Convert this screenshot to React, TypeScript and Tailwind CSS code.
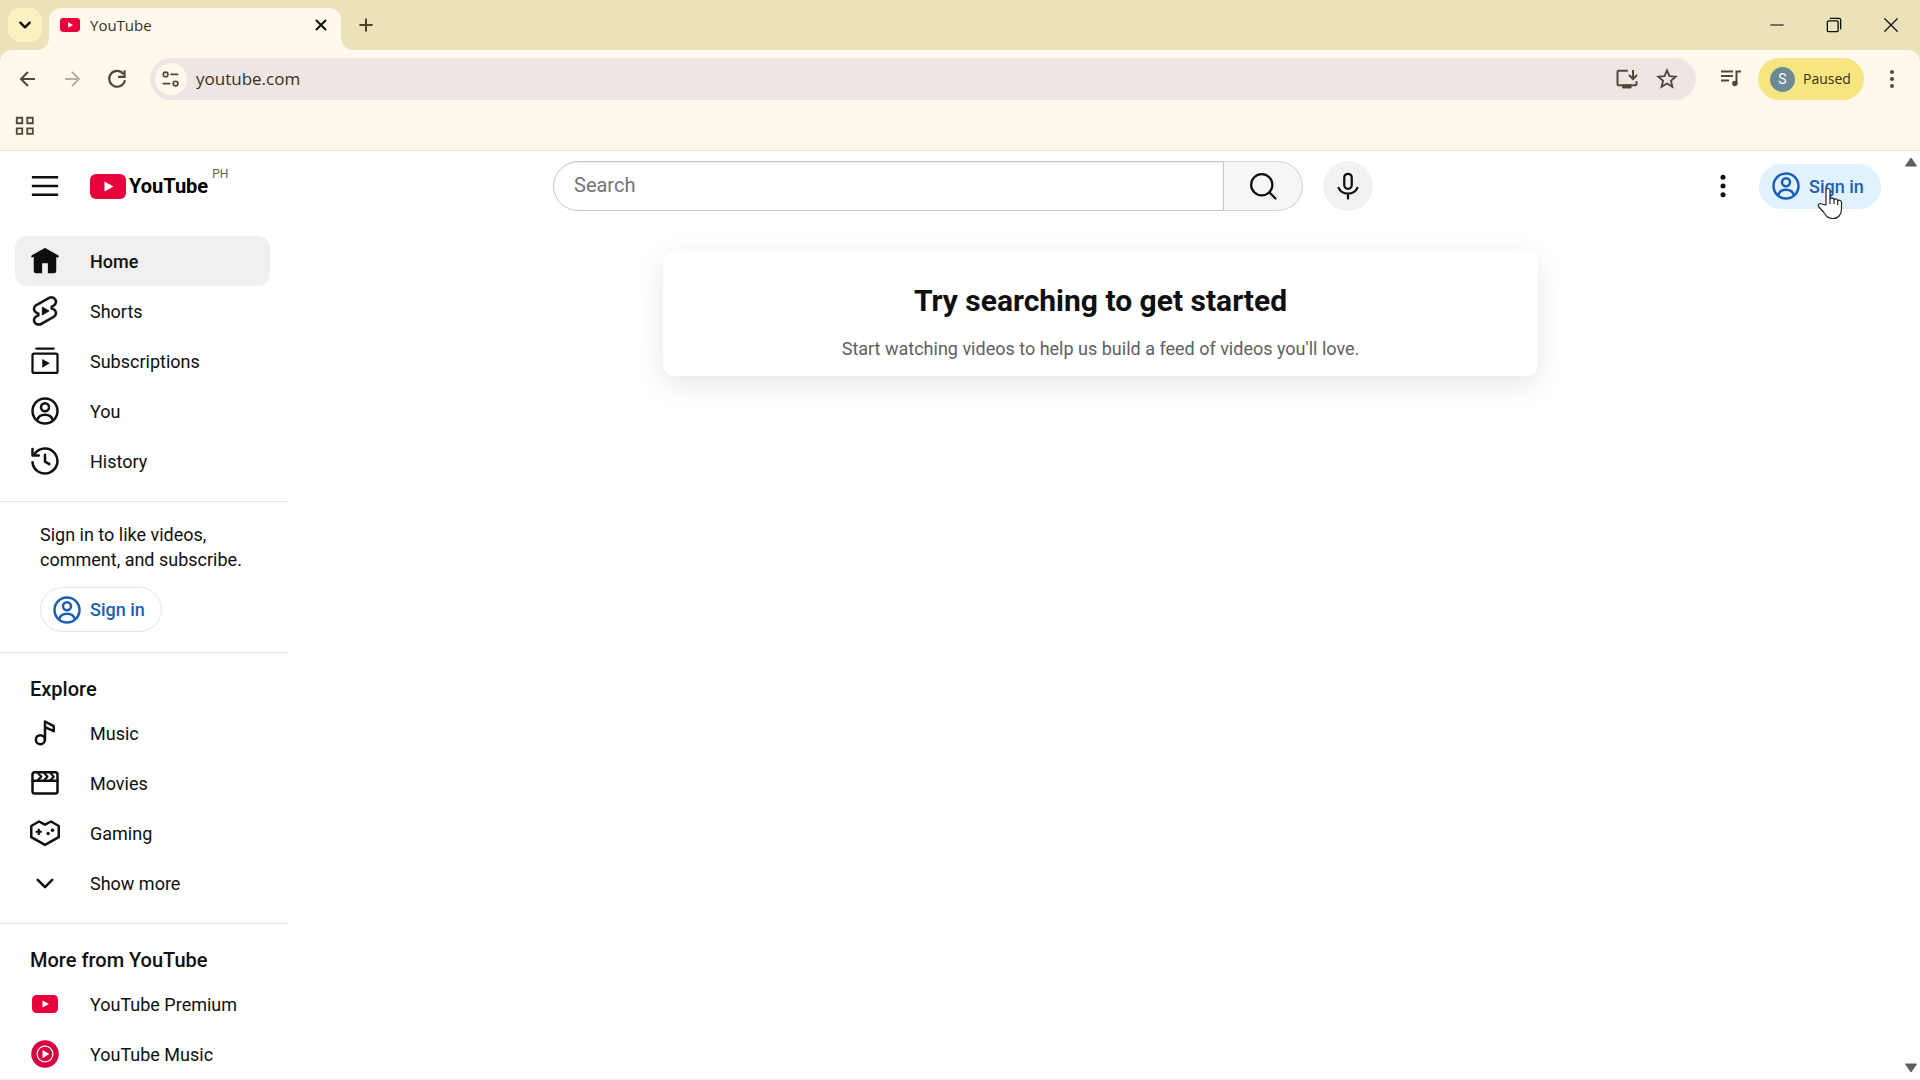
import type { ReactNode } from "react";

type IconProps = { className?: string };

function Svg({ className = "size-[30px]", children, box = "0 0 24 24" }: IconProps & { children: ReactNode; box?: string }) {
  return (
    <svg
      viewBox={box}
      className={`shrink-0 ${className}`}
      fill="none"
      stroke="currentColor"
      strokeWidth={2}
      strokeLinecap="round"
      strokeLinejoin="round"
      aria-hidden="true"
    >
      {children}
    </svg>
  );
}

const HomeIcon = () => (
  <Svg>
    <path
      d="M11.5 1.8 1.5 7.4c-.5.3-.6.9-.4 1.3.3.5.8.6 1.3.4l.6-.3V20a1.8 1.8 0 0 0 1.8 1.8h4.9v-8h4.6v8h4.9A1.8 1.8 0 0 0 21 20V8.8l.6.3c.5.2 1 .1 1.3-.4.2-.4.1-1-.4-1.3l-10-5.6a1 1 0 0 0-1 0z"
      fill="currentColor"
      stroke="none"
    />
  </Svg>
);

const ShortsIcon = () => (
  <Svg box="1.500 1.500 21 21">
    <path
      fill="currentColor"
      strokeWidth={0.3}
      fillRule="evenodd"
      d="m7.61 15.719.392-.22v-2.24l-.534-.228-.942-.404c-.869-.372-1.4-1.15-1.446-1.974-.047-.823.39-1.642 1.203-2.097h.001L15.13 3.59c1.231-.689 2.785-.27 3.466.833.652 1.058.313 2.452-.879 3.118l-1.327.743-.388.217v2.243l.53.227.942.404c.869.372 1.4 1.15 1.446 1.974.047.823-.39 1.642-1.203 2.097l-.002.001-8.845 4.964-.001.001c-1.231.688-2.784.269-3.465-.834-.652-1.058-.313-2.451.879-3.118l1.327-.742Zm1.993 6.002c-1.905 1.066-4.356.46-5.475-1.355-1.057-1.713-.548-3.89 1.117-5.025a4.14 4.14 0 01.305-.189l1.327-.742-.942-.404a4.055 4.055 0 01-.709-.391c-.963-.666-1.578-1.718-1.644-2.877-.08-1.422.679-2.77 1.968-3.49l8.847-4.966c1.905-1.066 4.356-.46 5.475 1.355 1.057 1.713.548 3.89-1.117 5.025a4.074 4.074 0 01-.305.19l-1.327.742.942.403c.253.109.49.24.709.392.963.666 1.578 1.717 1.644 2.876.08 1.423-.679 2.77-1.968 3.491l-8.847 4.965ZM10 14.567a.25.25 0 00.374.217l4.45-2.567a.25.25 0 000-.433l-4.45-2.567a.25.25 0 00-.374.216v5.134Z"
    />
  </Svg>
);

const SubscriptionsIcon = () => (
  <Svg>
    <path d="M5 2h14" strokeWidth={1.8} />
    <rect x="2" y="6" width="20" height="15.5" rx="1.2" strokeWidth={1.8} />
    <path d="M9.8 10.3v7l6-3.5z" fill="currentColor" stroke="none" />
  </Svg>
);

const PersonIcon = () => (
  <Svg>
    <circle cx="12" cy="12" r="10" />
    <circle cx="12" cy="9" r="3.2" />
    <path d="M5.800 19.200C6.600 16.300 9 15 12 15s5.400 1.300 6.200 4.200" />
  </Svg>
);

const HistoryIcon = () => (
  <Svg>
    <path d="M2 13a10 10 0 1 0 1.800-6.800" />
    <path d="M2 2.300V7.500h5" />
    <path d="M12 7v5.500l3.500 2" />
  </Svg>
);

const MusicIcon = () => (
  <Svg>
    <circle cx="8.300" cy="17.300" r="3.600" />
    <path d="M12 17V2.800l7 3.700v4L12 7.300" />
  </Svg>
);

const MoviesIcon = () => (
  <Svg>
    <rect x="2" y="3.300" width="20" height="17" rx="1.800" />
    <path d="M2 10.200h20" />
    <path d="M6 3.500 9 7 6 10M11 3.500 14 7l-3 3M16 3.500 19 7l-3 3" strokeWidth={1.7} />
  </Svg>
);

const GamingIcon = () => (
  <Svg>
    <path d="M12 5.300 16.800 2.800 23 6.400v8.900l-11 6.200L1 15.300V6.400l6.200-3.600z" />
    <path d="M7 8.500v5M4.500 11h5" strokeWidth={1.7} strokeLinecap="butt" />
    <circle cx="14.500" cy="12.300" r="1.400" fill="currentColor" stroke="none" />
    <circle cx="18" cy="9.800" r="1.400" fill="currentColor" stroke="none" />
  </Svg>
);

const ChevronIcon = () => (
  <Svg>
    <path d="m6.200 9.500 5.800 5.800 5.800-5.800" />
  </Svg>
);

function PlayBadge({ className }: IconProps) {
  return (
    <Svg className={className} box="0 0 36 25">
      <rect width="36" height="25" rx="6" fill="#e6003c" stroke="none" />
      <path d="M14.500 7.500v10l9-5z" fill="#fff" stroke="none" />
    </Svg>
  );
}

const YouTubeMusicIcon = () => (
  <Svg>
    <circle cx="12" cy="12" r="11" fill="#d9003f" stroke="none" />
    <circle cx="12" cy="12" r="6.300" stroke="#fff" strokeWidth={1} />
    <path d="M10 8.700v6.600l5.400-3.300z" fill="#fff" stroke="none" />
  </Svg>
);

const MoreDots = ({ className }: IconProps) => (
  <Svg className={className}>
    <g fill="currentColor" stroke="none">
      <circle cx="12" cy="5" r="2" />
      <circle cx="12" cy="12" r="2" />
      <circle cx="12" cy="19" r="2" />
    </g>
  </Svg>
);

function TitleBar() {
  return (
    <div className="flex h-[50px] items-end bg-[#ebe2b9]">
      <button aria-label="Search tabs" className="mb-2 ml-2 flex size-[34px] items-center justify-center rounded-xl bg-[#fbf0bf]">
        <Svg className="size-4">
          <path d="m5 8.500 7 7 7-7" strokeWidth={3.5} />
        </Svg>
      </button>
      <div className="relative ml-[7px] flex h-[42px] w-[292px] items-center rounded-t-[12px] bg-[#fff8ec] px-[11px] pb-[9px]">
        <svg viewBox="0 0 12 12" className="absolute bottom-0 -left-3 size-3 text-[#fff8ec]" aria-hidden="true">
          <path d="M12 0v12H0A12 12 0 0 0 12 0z" fill="currentColor" />
        </svg>
        <svg viewBox="0 0 12 12" className="absolute -right-3 bottom-0 size-3 text-[#fff8ec]" aria-hidden="true">
          <path d="M0 0v12h12A12 12 0 0 1 0 0z" fill="currentColor" />
        </svg>
        <PlayBadge className="h-[14px] w-5" />
        <span className="ml-[10px] flex-1 font-['Open_Sans',sans-serif] text-[15px] leading-5 text-[#35321f]">YouTube</span>
        <button aria-label="Close tab">
          <Svg className="size-[18px]">
            <path d="m6 6 12 12M18 6 6 18" strokeWidth={2.6} />
          </Svg>
        </button>
      </div>
      <button aria-label="New tab" className="mb-[15px] ml-[15px]">
        <Svg className="size-5 text-[#4a4530]">
          <path d="M12 5v14M5 12h14" strokeWidth={2.4} />
        </Svg>
      </button>
      <div className="mb-[15px] ml-auto flex items-center gap-[37px] pr-[19px]">
        <button aria-label="Minimize">
          <Svg className="size-5">
            <path d="M4 12h16" strokeWidth={1.3} strokeLinecap="butt" />
          </Svg>
        </button>
        <button aria-label="Restore">
          <Svg className="size-5">
            <rect x="4" y="7" width="13" height="13" rx="1.500" strokeWidth={1.6} />
            <path d="M7.500 4H18a2 2 0 0 1 2 2v10.500" strokeWidth={1.6} />
          </Svg>
        </button>
        <button aria-label="Close">
          <Svg className="size-5">
            <path d="m4.500 4.500 15 15M19.500 4.500l-15 15" strokeWidth={1.5} />
          </Svg>
        </button>
      </div>
    </div>
  );
}

function Toolbar() {
  return (
    <div className="bg-[#ebe2b9]">
      <div className="flex h-[100px] flex-col rounded-t-xl bg-[#fff8ec] pt-2 text-[#4d4837]">
        <div className="flex h-[42px] items-center">
          <button aria-label="Back" className="ml-4">
            <Svg className="size-6">
              <path d="M19 12H5M12 5l-7 7 7 7" strokeLinecap="butt" strokeLinejoin="miter" />
            </Svg>
          </button>
          <button aria-label="Forward" className="ml-5 text-[#b5b0a2]">
            <Svg className="size-6">
              <path d="M5 12h14M12 5l7 7-7 7" strokeLinecap="butt" strokeLinejoin="miter" />
            </Svg>
          </button>
          <button aria-label="Reload" className="ml-5">
            <Svg className="size-[26px]">
              <path d="M18 7.500A7.300 7.300 0 1 0 19.300 13" strokeLinecap="butt" />
              <path d="M19 4v6h-6" strokeLinecap="butt" strokeLinejoin="miter" />
            </Svg>
          </button>
          <div className="ml-5 flex h-[42px] flex-1 items-center rounded-full bg-[#efe6e3] pr-[18px] pl-[5px]">
            <button aria-label="Site information" className="flex size-8 items-center justify-center rounded-full bg-[#fff8ec]">
              <Svg className="size-5">
                <circle cx="5.500" cy="6.500" r="2.800" />
                <path d="M12 6.500h8M2.500 17.500h8" />
                <circle cx="17.500" cy="17.500" r="2.800" />
              </Svg>
            </button>
            <input
              aria-label="Address"
              defaultValue="youtube.com"
              className="ml-[9px] min-w-0 flex-1 bg-transparent font-['Open_Sans',sans-serif] text-[17px] leading-6 text-[#35321f] outline-none"
            />
            <button aria-label="Install app" className="mr-[17px]">
              <Svg className="size-6">
                <path d="M12 3.800H3.500a1 1 0 0 0-1 1v12.400a1 1 0 0 0 1 1h17a1 1 0 0 0 1-1V15" />
                <path d="M18 3v8.500M14 8l4 4 4-4" strokeLinecap="butt" strokeLinejoin="miter" />
                <path d="M8 18h8v3H8z" fill="currentColor" strokeWidth={1} />
              </Svg>
            </button>
            <button aria-label="Bookmark this tab">
              <Svg className="size-[22px]">
                <path d="m12 2.500 2.700 6.300 6.800.6-5.200 4.500 1.600 6.700-5.900-3.600-5.900 3.600 1.600-6.700-5.200-4.500 6.800-.6z" strokeLinejoin="miter" />
              </Svg>
            </button>
          </div>
          <button aria-label="Media controls" className="ml-[23px]">
            <Svg className="size-6">
              <path d="M2 4.500h12M2 9h12M2 13.500h8" strokeLinecap="butt" />
              <path d="M17.500 17V4.500H22" strokeLinecap="butt" strokeLinejoin="miter" />
              <circle cx="15.800" cy="16.500" r="2.700" fill="currentColor" stroke="none" />
            </Svg>
          </button>
          <button className="ml-[15px] flex h-[42px] w-[106px] items-center gap-2 rounded-full bg-[#f7e582] pl-3 font-['Open_Sans',sans-serif] text-sm text-[#38310c]">
            <span className="flex size-[25px] items-center justify-center rounded-full bg-[#6c8996] font-['Roboto',sans-serif] text-white">S</span>
            Paused
          </button>
          <button aria-label="Browser menu" className="mx-4">
            <MoreDots className="size-6" />
          </button>
        </div>
        <button aria-label="Apps" className="mt-[15px] ml-[14px] size-[22px]">
          <Svg className="size-[22px]">
            <path d="M3 3h6v6H3zM14.500 3h6v6h-6zM3 14.500h6v6H3zM14.500 14.500h6v6h-6z" strokeLinejoin="miter" />
          </Svg>
        </button>
      </div>
    </div>
  );
}

function SignIn({ className }: IconProps) {
  return (
    <a href="#signin" className={`flex h-[45px] w-[122px] items-center gap-2 rounded-full border pl-[11px] font-medium text-[#1a5fb4] ${className}`}>
      <PersonIcon />
      Sign in
    </a>
  );
}

function Masthead() {
  return (
    <header className="flex h-[70px] shrink-0 items-center px-5">
      <div className="flex flex-1 items-center">
        <button aria-label="Guide" className="flex size-[50px] items-center justify-center">
          <Svg className="size-[30px]">
            <path d="M1.500 5h21M1.500 12h21M1.500 19h21" strokeLinecap="butt" />
          </Svg>
        </button>
        <a href="#home" aria-label="YouTube home" className="ml-5 flex items-center gap-[3px]">
          <PlayBadge className="h-[25px] w-9" />
          <span className="text-xl leading-6 font-bold text-black">YouTube</span>
          <span className="mb-6 ml-px text-xs leading-3 text-[#606060]">PH</span>
        </a>
      </div>
      <div className="flex w-[845px] items-center pl-[25px]">
        <form role="search" className="flex h-[50px] w-[750px]">
          <input
            aria-label="Search"
            placeholder="Search"
            className="min-w-0 flex-1 rounded-l-full border border-[#c6c6c6] pb-[2px] pl-5 text-xl text-black shadow-[inset_0_1px_2px_#eee] outline-none placeholder:text-[#757575]"
          />
          <button type="button" aria-label="Run search" className="flex w-[79px] items-center justify-center rounded-r-full border border-l-0 border-[#d3d3d3] bg-[#f6f6f6]">
            <Svg className="size-[30px]">
              <circle cx="11" cy="11" r="8.500" strokeWidth={1.8} />
              <path d="m17.200 17.200 4.800 4.800" strokeWidth={1.8} />
            </Svg>
          </button>
        </form>
        <button aria-label="Search with your voice" className="ml-5 flex size-[50px] items-center justify-center rounded-full bg-[#f2f2f2]">
          <Svg className="size-[30px]">
            <rect x="9" y="2.200" width="6" height="12" rx="3" strokeWidth={1.8} />
            <path d="M4.500 13.500c1.300 3 4 4.500 7.500 4.500s6.200-1.500 7.500-4.500M12 18v4" strokeWidth={1.8} />
          </Svg>
        </button>
      </div>
      <div className="flex flex-1 items-center justify-end">
        <button aria-label="Settings" className="mr-[11px] flex size-[50px] items-center justify-center">
          <MoreDots className="size-[30px]" />
        </button>
        <div className="relative">
          <SignIn className="border-[#e0f1ff] bg-[#e0f1ff]" />
          {/* hand pointer over the sign in link */}
          <svg viewBox="0 0 26 34" className="absolute top-[22px] left-[58px] h-[34px] w-[26px]" aria-hidden="true">
            <path
              d="M9 19V4.500a2 2 0 0 1 4 0V13c1-1.500 3.500-1 4 .5 1-1 3.300-.6 3.700 1 1.500-.8 3.800 0 3.800 2V23c0 6-3.500 9.500-8.500 9.500-5.500 0-7.200-3-9.500-6.500L1.500 20.500c-1-2 1-3.500 3-2.500z"
              fill="#fff"
              stroke="#222"
              strokeWidth="1.200"
              strokeLinejoin="round"
            />
            <path d="M13 13v5M17 13.500V18M20.700 14.500V19" stroke="#222" strokeWidth="1.200" />
          </svg>
        </div>
      </div>
    </header>
  );
}

type Entry = { label: string; icon: ReactNode; active?: boolean };

const mainLinks: Entry[] = [
  { label: "Home", icon: <HomeIcon />, active: true },
  { label: "Shorts", icon: <ShortsIcon /> },
  { label: "Subscriptions", icon: <SubscriptionsIcon /> },
  { label: "You", icon: <PersonIcon /> },
  { label: "History", icon: <HistoryIcon /> },
];

const exploreLinks: Entry[] = [
  { label: "Music", icon: <MusicIcon /> },
  { label: "Movies", icon: <MoviesIcon /> },
  { label: "Gaming", icon: <GamingIcon /> },
  { label: "Show more", icon: <ChevronIcon /> },
];

const moreLinks: Entry[] = [
  { label: "YouTube Premium", icon: <span className="flex w-[30px] justify-center"><PlayBadge className="h-[18px] w-[26px]" /></span> },
  { label: "YouTube Music", icon: <YouTubeMusicIcon /> },
];

function GuideList({ items }: { items: Entry[] }) {
  return (
    <ul className="pr-[18px] pl-[15px]">
      {items.map((item) => (
        <li key={item.label}>
          <a
            href="#"
            className={`flex h-[50px] items-center gap-[30px] rounded-xl pl-[15px] ${item.active ? "bg-[#f0f0f0] font-medium" : ""}`}
          >
            {item.icon}
            {item.label}
          </a>
        </li>
      ))}
    </ul>
  );
}

function Guide() {
  return (
    <nav className="w-[300px] shrink-0 overflow-hidden pt-[15px] pr-3">
      <div className="border-b border-[#e5e5e5] pb-[15px]">
        <GuideList items={mainLinks} />
      </div>
      <div className="border-b border-[#e5e5e5] px-10 py-5">
        <p className="leading-[25px] whitespace-nowrap">
          Sign in to like videos,
          <br />
          comment, and subscribe.
        </p>
        <SignIn className="mt-[15px] border-[#e5e5e5]" />
      </div>
      <div className="border-b border-[#e5e5e5] py-[15px]">
        <h3 className="h-10 pl-[30px] text-xl leading-[42px] font-medium">Explore</h3>
        <GuideList items={exploreLinks} />
      </div>
      <div className="pt-[15px]">
        <h3 className="h-10 pl-[30px] text-xl leading-[42px] font-medium">More from YouTube</h3>
        <GuideList items={moreLinks} />
      </div>
    </nav>
  );
}

export default function App() {
  return (
    <div className="flex h-screen flex-col overflow-hidden bg-white text-[#0f0f0f]">
      <TitleBar />
      <Toolbar />
      <div className="flex min-h-0 flex-1 border-y border-t-[#ece3d4] border-b-[#f0f0f0] font-['Roboto',sans-serif] text-[18px]">
        <div className="flex min-w-0 flex-1 flex-col">
          <Masthead />
          <div className="flex min-h-0 flex-1">
            <Guide />
            <main className="flex-1 px-6 pt-[30px]">
              <section className="mx-auto max-w-[875px] rounded-xl bg-white pt-[30px] pb-[15px] text-center shadow-[0_8px_30px_rgba(0,0,0,0.1)]">
                <h1 className="text-[30px] leading-10 font-bold">Try searching to get started</h1>
                <p className="mt-[15px] leading-[25px] text-[#606060]">
                  Start watching videos to help us build a feed of videos you'll love.
                </p>
              </section>
            </main>
          </div>
        </div>
        <div className="flex w-[19px] flex-col items-center justify-between py-[6px] text-[#5f5f5f]" aria-hidden="true">
          <svg viewBox="0 0 12 10" className="h-[10px] w-3"><path d="M6 1 11.500 9H.5z" fill="currentColor" stroke="currentColor" strokeLinejoin="round" /></svg>
          <svg viewBox="0 0 12 10" className="h-[10px] w-3"><path d="M6 9 11.500 1H.5z" fill="currentColor" stroke="currentColor" strokeLinejoin="round" /></svg>
        </div>
      </div>
    </div>
  );
}
